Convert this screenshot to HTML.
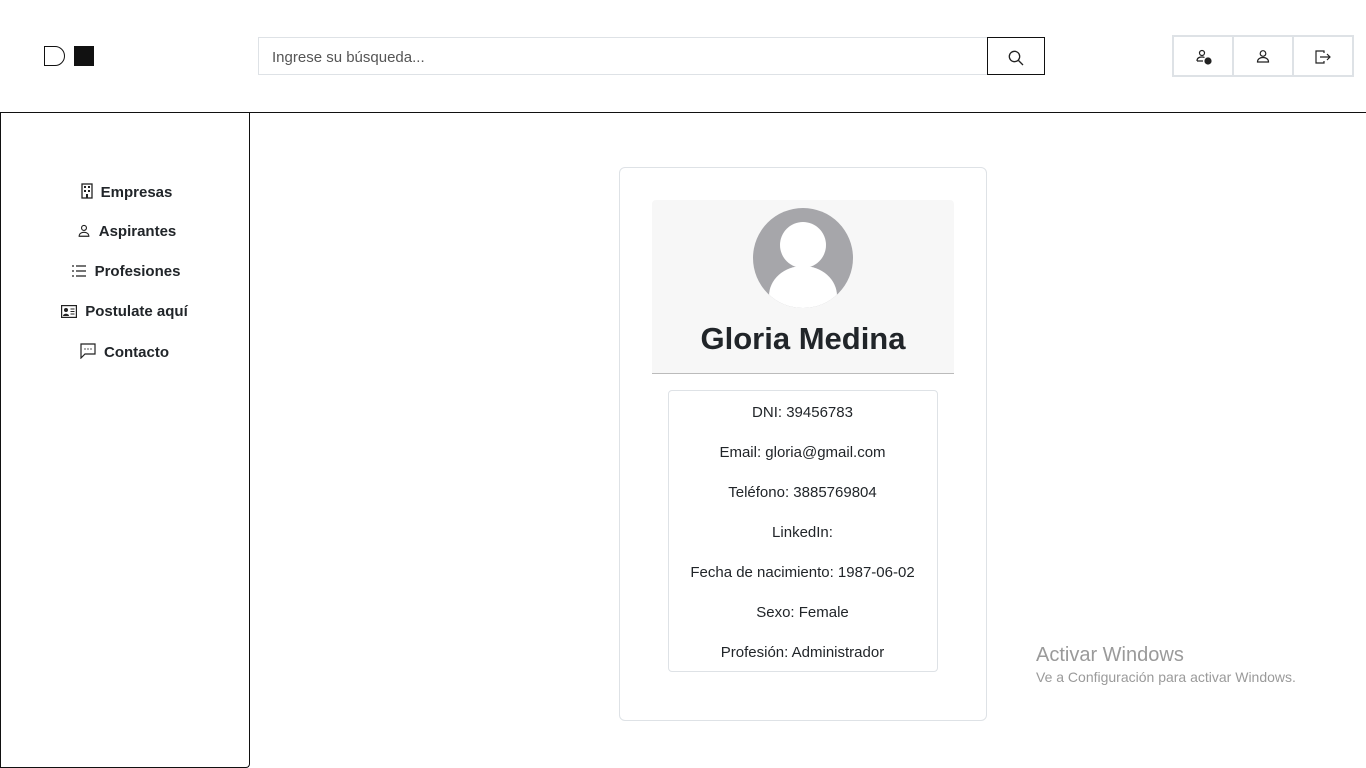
<!DOCTYPE html>
<html><head><meta charset="utf-8"><style>
*{box-sizing:border-box;margin:0;padding:0}
body{width:1366px;height:768px;position:relative;background:#fff;font-family:"Liberation Sans",sans-serif;color:#212529;overflow:hidden}
.abs{position:absolute}
.nav{position:absolute;left:0;width:249px;text-align:center;font-size:15px;font-weight:bold;color:#212529}
.nav svg{vertical-align:-2px;margin-right:8px}
.det{position:absolute;left:668px;width:269px;text-align:center;font-size:15px}
</style></head><body>
<div class="abs" style="left:44px;top:46px;width:21px;height:20px;border:1.5px solid #111;border-radius:0 10px 10px 0"></div>
<div class="abs" style="left:74px;top:46px;width:20px;height:20px;background:#111"></div>
<div class="abs" style="left:258px;top:37px;width:730px;height:38px;border:1px solid #dee2e6;font-size:15px;color:#555;padding:11px 13px">Ingrese su búsqueda...</div>
<div class="abs" style="left:987px;top:37px;width:58px;height:38px;border:1px solid #111"><svg class="abs" style="left:20px;top:12px" width="16" height="16" viewBox="0 0 16 16" fill="none" stroke="#222" stroke-width="1.3"><circle cx="6.5" cy="6.5" r="5.2"/><path d="M10.5 10.5L15 15"/></svg></div>
<div class="abs" style="left:1172px;top:35px;width:182px;height:42px;border:2px solid #dee2e6;display:flex">
<div style="flex:1;border-right:2px solid #dee2e6;position:relative"><svg class="abs" style="left:22px;top:12px" width="16" height="16" viewBox="0 0 16 16" fill="none" stroke="#222" stroke-width="1.2"><circle cx="6" cy="4" r="2.5"/><path d="M1 12c0-3 2-4 5-4 1 0 2 .2 2.5.5M1 12h6"/><circle cx="12" cy="12" r="3" fill="#222"/></svg></div>
<div style="flex:1;border-right:2px solid #dee2e6;position:relative"><svg class="abs" style="left:21px;top:12px" width="16" height="16" viewBox="0 0 16 16" fill="none" stroke="#222" stroke-width="1.2"><circle cx="8" cy="4.5" r="2.8"/><path d="M2.5 13c0-3 2.5-4.5 5.5-4.5s5.5 1.5 5.5 4.5z"/></svg></div>
<div style="flex:1;position:relative"><svg class="abs" style="left:20px;top:12px" width="17" height="16" viewBox="0 0 17 16" fill="none" stroke="#222" stroke-width="1.2"><path d="M10 4V2H2v12h8v-2M6 8h10M13 5l3 3-3 3"/></svg></div>
</div>
<div class="abs" style="left:0;top:112px;width:1366px;height:1px;background:#111"></div>
<div class="abs" style="left:0;top:112px;width:250px;height:656px;border:1px solid #111;border-top:none;border-radius:0 0 4px 0"></div>
<div class="nav" style="top:183px;left:2px"><svg width="12" height="16" viewBox="0 0 12 16"><rect x="1" y="1" width="10" height="14" fill="none" stroke="#222" stroke-width="1.3"/><path d="M3 3h2v2H3zM7 3h2v2H7zM3 7h2v2H3zM7 7h2v2H7zM5 11h2v4H5z" fill="#222"/></svg>Empresas</div>
<div class="nav" style="top:223px;left:2px"><svg width="14" height="14" viewBox="0 0 16 16" fill="none" stroke="#222" stroke-width="1.3"><circle cx="8" cy="4.5" r="2.8"/><path d="M2.5 14c0-3 2.5-4.5 5.5-4.5s5.5 1.5 5.5 4.5z"/></svg>Aspirantes</div>
<div class="nav" style="top:263px;left:1px"><svg width="16" height="14" viewBox="0 0 16 14" stroke="#222" stroke-width="1.2"><path d="M5 2h10M5 7h10M5 12h10M1 2h2M1 7h2M1 12h2"/></svg>Profesiones</div>
<div class="nav" style="top:303px"><svg width="16" height="13" viewBox="0 0 16 13"><rect x=".6" y=".6" width="14.8" height="11.8" fill="none" stroke="#222" stroke-width="1.2"/><circle cx="5" cy="5" r="2" fill="#222"/><path d="M2 11c0-3 6-3 6 0z" fill="#222"/><path d="M9.5 4h4M9.5 6.5h4M9.5 9h4" stroke="#222"/></svg>Postulate aquí</div>
<div class="nav" style="top:343px"><svg width="16" height="16" viewBox="0 0 16 16" fill="none" stroke="#222" stroke-width="1.2"><path d="M1 1h14v10H5l-4 4z"/><path d="M4.5 6h1M7.5 6h1M10.5 6h1" stroke-width="1.6"/></svg>Contacto</div>
<div class="abs" style="left:619px;top:167px;width:368px;height:554px;border:1px solid #dee2e6;border-radius:6px"></div>
<div class="abs" style="left:652px;top:200px;width:302px;height:174px;background:#f7f7f7;border-bottom:1px solid #bbb;border-radius:4px 4px 0 0;overflow:hidden">
<div class="abs" style="left:101px;top:8px;width:100px;height:100px;border-radius:50%;background:#a6a6aa;overflow:hidden">
<div class="abs" style="left:27px;top:14px;width:46px;height:46px;border-radius:50%;background:#fff"></div>
<div class="abs" style="left:16px;top:58px;width:68px;height:60px;border-radius:50% 50% 0 0;background:#fff"></div></div>
<div class="abs" style="left:0;top:121px;width:302px;text-align:center;font-size:31px;font-weight:bold;color:#212529">Gloria Medina</div>
</div>
<div class="abs" style="left:668px;top:390px;width:270px;height:282px;border:1px solid #dee2e6;border-radius:4px"></div>
<div class="det" style="top:404px">DNI: 39456783</div>
<div class="det" style="top:444px">Email: gloria@gmail.com</div>
<div class="det" style="top:484px">Teléfono: 3885769804</div>
<div class="det" style="top:524px">LinkedIn:</div>
<div class="det" style="top:564px">Fecha de nacimiento: 1987-06-02</div>
<div class="det" style="top:604px">Sexo: Female</div>
<div class="det" style="top:644px">Profesión: Administrador</div>
<div class="abs" style="left:1036px;top:644px;font-size:20px;color:#9a9a9a">Activar Windows</div>
<div class="abs" style="left:1036px;top:669px;font-size:14px;color:#9a9a9a">Ve a Configuración para activar Windows.</div>
</body></html>
